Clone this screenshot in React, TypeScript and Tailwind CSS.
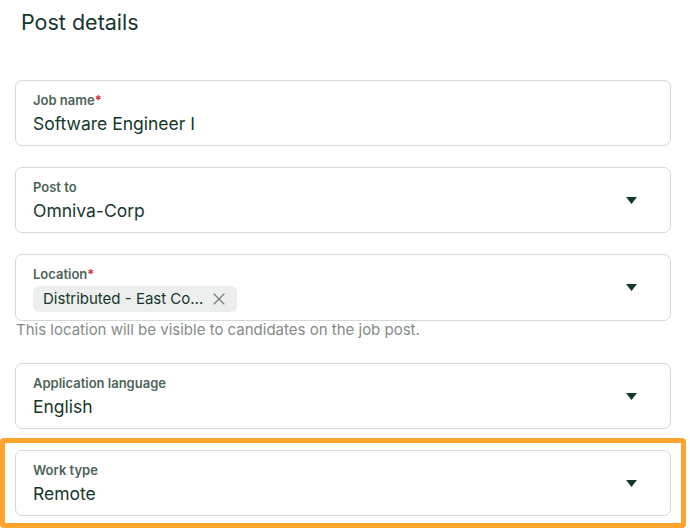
import { X } from "lucide-react";

const Caret = () => (
  <svg width="11" height="7" viewBox="0 0 11 7" className="shrink-0">
    <path d="M0 0h11L5.5 7z" fill="#15372c" />
  </svg>
);

type FieldProps = {
  label: string;
  required?: boolean;
  value?: string;
  select?: boolean;
  chip?: string;
};

const Field = ({ label, required, value, select, chip }: FieldProps) => (
  <div className="flex items-center rounded-[7px] border border-[#d3d9d6] bg-white pl-[17px] pr-[33px]">
    <div className="flex-1 pt-[11px]">
      <div className="text-[13px] leading-[16px] font-semibold text-[#4d6459]">
        {label}
        {required && <span className="text-[#d9262b]">*</span>}
      </div>
      {chip ? (
        <div className="mt-[4px] mb-[8px] inline-flex h-[26px] items-center gap-[6px] rounded-[6px] bg-[#ecefed] pl-[10px] pr-[8px]">
          <span className="text-[15px] text-[#15372c]">{chip}</span>
          <X size={20} strokeWidth={1.4} color="#6f7c76" />
        </div>
      ) : (
        <div className="mt-[4px] pb-[9px] text-[17.5px] leading-[24px] text-[#15372c]">
          {value}
        </div>
      )}
    </div>
    {select && <Caret />}
  </div>
);

export default function App() {
  return (
    <div className="min-h-[532px] w-[690px] bg-white font-['Inter',sans-serif]">
      <h2 className="pl-[21px] pt-[8px] text-[21.5px] leading-[29px] text-[#15372c]">
        Post details
      </h2>
      <div className="mt-[43px] flex w-[656px] flex-col pl-0 ml-[15px]">
        <Field label="Job name" required value="Software Engineer I" />
        <div className="mt-[21px]">
          <Field label="Post to" value="Omniva-Corp" select />
        </div>
        <div className="mt-[21px]">
          <Field label="Location" required chip="Distributed - East Co…" select />
        </div>
        <p className="ml-[1px] text-[15px] leading-[18px] text-[#858b88]">
          This location will be visible to candidates on the job post.
        </p>
        <div className="mt-[24px]">
          <Field label="Application language" value="English" select />
        </div>
        <div className="mt-[9px] -ml-[15px] w-[686px] rounded-[4px] border-[5px] border-[#ffa42f] px-[10px] py-[7px]">
          <Field label="Work type" value="Remote" select />
        </div>
      </div>
    </div>
  );
}
